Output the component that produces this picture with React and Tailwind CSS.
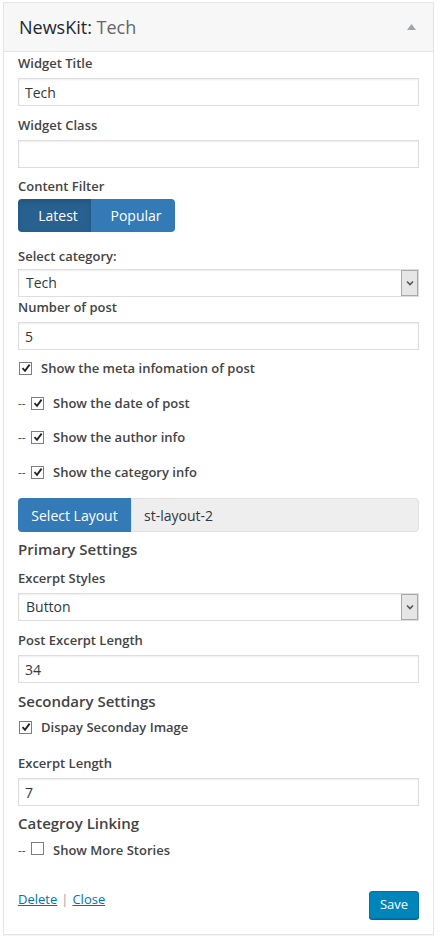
import { useState } from 'react';

const font = { fontFamily: '"Open Sans", "Liberation Sans", sans-serif' };

function Label({ children, className = '' }) {
  return (
    <div className={`h-[18px] text-[13px] leading-[18px] font-semibold text-[#444] ${className}`}>
      {children}
    </div>
  );
}

function Heading({ children, className = '' }) {
  return (
    <div className={`h-[20px] text-[15px] leading-[20px] font-semibold text-[#444] ${className}`}>
      {children}
    </div>
  );
}

function TextInput({ value, className = '' }) {
  return (
    <input
      defaultValue={value}
      className={`block w-full h-[28px] px-[6px] border border-[#ddd] bg-white text-[14px] text-[#32373c] shadow-[inset_0_1px_2px_rgba(0,0,0,0.07)] outline-none ${className}`}
      style={font}
    />
  );
}

function Select({ value, className = '' }) {
  return (
    <div
      className={`flex h-[28px] items-stretch border border-[#ddd] bg-white shadow-[inset_0_1px_2px_rgba(0,0,0,0.07)] ${className}`}
    >
      <div className="flex-1 pl-[7px] text-[14px] leading-[26px] text-[#32373c]">{value}</div>
      <div className="flex w-[17px] items-center justify-center border border-[#a9a9a9] bg-[#e6e6e6]">
        <svg width="8" height="6" viewBox="0 0 8 6">
          <path d="M1 1.5 L4 4.5 L7 1.5" fill="none" stroke="#555" strokeWidth="1.6" />
        </svg>
      </div>
    </div>
  );
}

function Checkbox({ checked }) {
  return (
    <span className="inline-flex h-[13px] w-[13px] items-center justify-center border border-[#7e7e7e] bg-white">
      {checked && (
        <svg width="10" height="10" viewBox="0 0 10 10">
          <path d="M1.5 5.2 L4 7.8 L8.6 1.6" fill="none" stroke="#222" strokeWidth="1.8" />
        </svg>
      )}
    </span>
  );
}

function CheckRow({ label, checked, sub, className = '' }) {
  return (
    <div className={`flex h-[18px] items-center text-[13px] font-semibold text-[#444] ${className}`}>
      {sub && <span className="mr-[4px] w-[9px] text-[12px] font-normal text-[#555]">--</span>}
      <span className={sub ? '' : 'ml-[1px]'}>
        <Checkbox checked={checked} />
      </span>
      <span className={sub ? 'ml-[9px]' : 'ml-[9px]'}>{label}</span>
    </div>
  );
}

export default function App() {
  const [filter, setFilter] = useState('latest');

  return (
    <div className="min-h-screen bg-white pt-[2px]" style={font}>
      <div className="ml-[3px] w-[431px] border border-[#e5e5e5] bg-white shadow-[0_1px_1px_rgba(0,0,0,0.04)]">
        <div className="flex h-[49px] items-center justify-between border-b border-[#e5e5e5] bg-[#f7f7f7] pl-[15px] pr-[17px]">
          <h3 className="text-[18px] font-normal text-[#23282d]">
            NewsKit: <span className="text-[#666]">Tech</span>
          </h3>
          <svg width="9" height="6" viewBox="0 0 9 6">
            <path d="M0 6 L4.5 0 L9 6 Z" fill="#a0a5aa" />
          </svg>
        </div>

        <div className="px-[14px] pb-[15px]">
          <Label className="mt-[2px]">Widget Title</Label>
          <TextInput value="Tech" className="mt-[6px]" />

          <Label className="mt-[10px]">Widget Class</Label>
          <TextInput value="" className="mt-[6px]" />

          <Label className="mt-[9px]">Content Filter</Label>
          <div className="mt-[4px] flex h-[33px] w-fit overflow-hidden rounded-[4px] text-[14px] text-white">
            <button
              onClick={() => setFilter('latest')}
              className={`w-[73px] pl-[7px] ${filter === 'latest' ? 'bg-[#286090] shadow-[inset_0_3px_5px_rgba(0,0,0,0.125)]' : 'bg-[#337ab7]'}`}
            >
              Latest
            </button>
            <button
              onClick={() => setFilter('popular')}
              className={`w-[84px] pl-[6px] ${filter === 'popular' ? 'bg-[#286090] shadow-[inset_0_3px_5px_rgba(0,0,0,0.125)]' : 'bg-[#337ab7]'}`}
            >
              Popular
            </button>
          </div>

          <Label className="mt-[15px]">Select category:</Label>
          <Select value="Tech" className="mt-[4px]" />

          <Label className="mt-[1px]">Number of post</Label>
          <TextInput value="5" className="mt-[6px]" />

          <CheckRow className="mt-[10px]" checked label="Show the meta infomation of post" />
          <CheckRow className="mt-[17px]" sub checked label="Show the date of post" />
          <CheckRow className="mt-[16px]" sub checked label="Show the author info" />
          <CheckRow className="mt-[17px]" sub checked label="Show the category info" />

          <div className="mt-[16px] flex h-[34px] text-[14px]">
            <button className="w-[113px] rounded-l-[4px] bg-[#337ab7] text-white">Select Layout</button>
            <div className="flex flex-1 items-center rounded-r-[4px] border border-[#e0e0e0] bg-[#eee] pl-[12px] text-[#32373c]">
              st-layout-2
            </div>
          </div>

          <Heading className="mt-[7px]">Primary Settings</Heading>
          <Label className="mt-[10px]">Excerpt Styles</Label>
          <Select value="Button" className="mt-[6px]" />

          <Label className="mt-[10px]">Post Excerpt Length</Label>
          <TextInput value="34" className="mt-[6px]" />

          <Heading className="mt-[8px]">Secondary Settings</Heading>
          <CheckRow className="mt-[8px]" checked label="Dispay Seconday Image" />

          <Label className="mt-[17px]">Excerpt Length</Label>
          <TextInput value="7" className="mt-[6px]" />

          <Heading className="mt-[7px]">Categroy Linking</Heading>
          <CheckRow className="mt-[9px]" sub checked={false} label="Show More Stories" />

          <div className="mt-[31px] flex items-start justify-between">
            <div className="-mt-[1px] text-[13px] leading-[18px] text-[#a0a5aa]">
              <a href="#" className="text-[#0073aa] underline">Delete</a>
              <span className="mx-[4px]">|</span>
              <a href="#" className="text-[#0073aa] underline">Close</a>
            </div>
            <button className="h-[28px] w-[50px] rounded-[3px] border border-[#0073aa] bg-[#0085ba] text-[13px] text-white shadow-[0_1px_0_#006799]">
              Save
            </button>
          </div>
        </div>
      </div>
    </div>
  );
}
